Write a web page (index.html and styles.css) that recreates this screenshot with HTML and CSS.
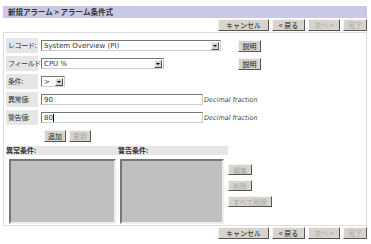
FILE: index.html
```html
<!DOCTYPE html>
<html lang="ja">
<head>
    <meta charset="UTF-8">
    <title>アラーム条件式</title>
    <link rel="stylesheet" href="styles.css">
</head>
<body>
    <div class="page">
        <div class="titlebar">新規アラーム &gt; アラーム条件式</div>

        <div class="nav">
            <button class="btn">キャンセル</button>
            <button class="btn">&lt; 戻る</button>
            <button class="btn" disabled>次へ &gt;</button>
            <button class="btn" disabled>完了</button>
        </div>

        <div class="panel">
            <div class="row">
                <span class="lbl">レコード:</span>
                <div class="select sel-record"><span>System Overview (PI)</span><i class="arrow"></i></div>
                <button class="btn help">説明</button>
            </div>
            <div class="row">
                <span class="lbl">フィールド:</span>
                <div class="select sel-field"><span>CPU %</span><i class="arrow"></i></div>
                <button class="btn help help-field">説明</button>
            </div>
            <div class="row">
                <span class="lbl">条件:</span>
                <div class="select sel-cond"><span>&gt;</span><i class="arrow"></i></div>
            </div>
            <div class="row">
                <span class="lbl">異常値:</span>
                <div class="input">90</div>
                <span class="hint">Decimal fraction</span>
            </div>
            <div class="row">
                <span class="lbl">警告値:</span>
                <div class="input">80<span class="caret"></span></div>
                <span class="hint">Decimal fraction</span>
            </div>
            <div class="row actions">
                <button class="btn">追加</button>
                <button class="btn" disabled>更新</button>
            </div>

            <div class="lists">
                <div class="list-col">
                    <div class="list-head">異常条件:</div>
                    <div class="listbox"></div>
                </div>
                <div class="list-col list-col-warn">
                    <div class="list-head">警告条件:</div>
                    <div class="listbox"></div>
                </div>
                <div class="list-btns">
                    <button class="btn" disabled>編集</button>
                    <button class="btn" disabled>削除</button>
                    <button class="btn" disabled>すべて削除</button>
                </div>
            </div>
        </div>

        <div class="nav">
            <button class="btn">キャンセル</button>
            <button class="btn">&lt; 戻る</button>
            <button class="btn" disabled>次へ &gt;</button>
            <button class="btn" disabled>完了</button>
        </div>
    </div>
</body>
</html>
```

FILE: styles.css
```css
body {
    margin: 0;
    background: #ffffff;
    font-family: "Noto Sans CJK JP", "DejaVu Sans", sans-serif;
    font-size: 8px;
    color: #222;
}
.page {
    width: 364px;
    padding: 6px 0 0 3px;
}
.titlebar {
    height: 12px;
    line-height: 12px;
    background: #c9c9e6;
    font-weight: bold;
    font-size: 7.5px;
    padding-left: 5px;
    color: #333;
}
.nav {
    display: flex;
    justify-content: flex-end;
    gap: 3px;
    height: 12px;
    margin: 1px 0;
}
.btn {
    font-family: inherit;
    font-size: 7px;
    height: 12px;
    padding: 0 4px;
    line-height: 10px;
    white-space: nowrap;
    background: #d8d4cc;
    color: #222;
    border: 1px solid;
    border-color: #f4f4f4 #555 #555 #f4f4f4;
    margin: 0;
}
.nav .btn {
    padding: 0;
}
.nav .btn:first-child {
    width: 51px;
}
.nav .btn:nth-child(2) {
    width: 33px;
}
.nav .btn:nth-child(3) {
    width: 32px;
}
.nav .btn:nth-child(4) {
    width: 24px;
}
.btn:disabled {
    color: #a8a8a8;
}
.panel {
    border: 1px solid #ddd;
    padding: 5px 0 0 2px;
    height: 194px;
    box-sizing: border-box;
}
.row {
    display: flex;
    align-items: center;
    height: 15px;
    margin-bottom: 3px;
}
.lbl {
    width: 30px;
    height: 15px;
    line-height: 15px;
    background: #e6e6e6;
    padding-left: 2px;
    font-size: 7px;
    white-space: nowrap;
    letter-spacing: -0.4px;
    color: #333;
}
.select, .input {
    margin-left: 3px;
    height: 11px;
    box-sizing: border-box;
    border: 1px solid;
    border-color: #777 #ccc #ccc #777;
    display: flex;
    align-items: center;
    font-family: "DejaVu Sans", sans-serif;
    font-size: 7px;
    padding-left: 2px;
    background: #fff;
    color: #333;
}
.select span {
    flex: 1;
}
.sel-record {
    width: 180px;
}
.sel-field {
    width: 123px;
}
.sel-cond {
    width: 24px;
}
.arrow {
    width: 8px;
    height: 8px;
    margin-right: 1px;
    background: #d8d4cc;
    border: 1px solid;
    border-color: #f4f4f4 #555 #555 #f4f4f4;
    box-sizing: border-box;
    position: relative;
}
.arrow::after {
    content: "";
    position: absolute;
    left: 1px;
    top: 2px;
    border-left: 2px solid transparent;
    border-right: 2px solid transparent;
    border-top: 2px solid #000;
}
.help {
    margin-left: 17px;
    width: 23px;
    padding: 0;
}
.help-field {
    margin-left: 74px;
}
.input {
    width: 162px;
}
.caret {
    display: inline-block;
    width: 1px;
    height: 8px;
    background: #000;
}
.hint {
    font-family: "DejaVu Sans", sans-serif;
    font-style: italic;
    font-size: 6.5px;
    color: #444;
    margin-left: 1px;
}
.actions {
    padding-left: 38px;
    gap: 3px;
}
.actions .btn {
    padding: 0 3px;
}
.lists {
    display: flex;
    margin-top: 3px;
}
.list-col {
    width: 112px;
    display: flex;
    flex-direction: column;
}
.list-col-warn {
    width: 110px;
}
.list-head {
    background: #e6e6e6;
    height: 9px;
    line-height: 9px;
    font-size: 7px;
    font-weight: bold;
    color: #333;
}
.listbox {
    margin: 4px 2px 0 3px;
    height: 65px;
    background: #c0c0c0;
    border: 2px solid;
    border-color: #777 #eee #eee #777;
    box-sizing: border-box;
}
.list-col-warn .listbox {
    margin: 4px 4px 0 2px;
}
.list-btns {
    display: flex;
    flex-direction: column;
    align-items: flex-start;
    gap: 5px;
    padding-top: 18px;
}
.list-btns .btn {
    height: 11px;
    padding: 0 4px;
}
```
